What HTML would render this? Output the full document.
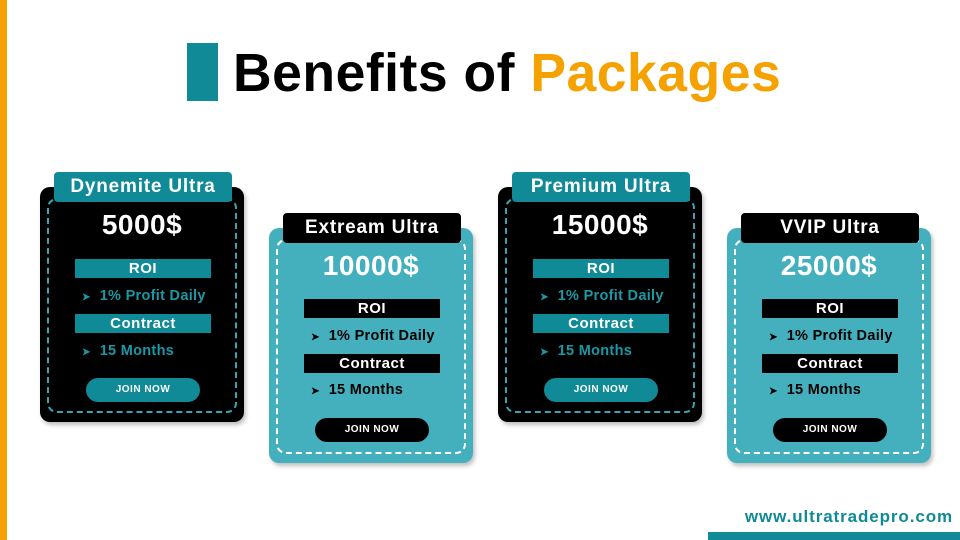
<!DOCTYPE html>
<html><head><style>
*{margin:0;padding:0;box-sizing:border-box}
body{width:960px;height:540px;background:#fff;position:relative;overflow:hidden;font-family:"Liberation Sans",sans-serif;font-weight:bold}
.abs{position:absolute}
.card{position:absolute;width:204px;height:235px;border-radius:10px;box-shadow:2px 3px 4px rgba(0,0,0,.25)}
.dash{position:absolute;left:7px;right:7px;top:11px;bottom:9px;border:2px dashed;border-radius:10px}
.lbl{position:absolute;left:14px;width:178px;top:-15px;height:30px;border-radius:4px;font-size:19px;letter-spacing:0.8px;text-align:center;line-height:30px;color:#fff}
.price{position:absolute;left:0;right:0;top:22px;text-align:center;font-size:28px;letter-spacing:0.5px;color:#fff}
.bar{position:absolute;left:35px;width:136px;height:19px;text-align:center;font-size:15px;letter-spacing:0.5px;line-height:19px;color:#fff}
.li{position:absolute;left:42px;font-size:14.5px;letter-spacing:0.3px}
.li span{font-size:10px;margin-right:9px}
.btn{position:absolute;left:46px;width:114px;height:24px;border-radius:12px;text-align:center;line-height:24px;font-size:10px;color:#fff;letter-spacing:.5px}
.k{background:#000}.k .dash{border-color:#3aa4b0}.k .lbl,.k .bar,.k .btn{background:#0f8a96}.k .li{color:#1b98a5}
.t{background:#45b0bd}.t .dash{border-color:#fff}.t .lbl,.t .bar,.t .btn{background:#000}.t .li{color:#000}
</style></head><body>
<div class="abs" style="left:0;top:0;width:7px;height:540px;background:#f5a100"></div>
<div class="abs" style="left:187px;top:43px;width:31px;height:58px;background:#0f8a96"></div>
<div class="abs" style="left:233px;top:43px;font-size:53.5px;letter-spacing:0.5px;line-height:62px;color:#000;white-space:nowrap">Benefits of <span style="color:#f5a100">Packages</span></div>

<div class="card k" style="left:40px;top:187px"><div class="dash"></div><div class="lbl">Dynemite Ultra</div><div class="price">5000$</div>
<div class="bar" style="top:72px">ROI</div><div class="li" style="top:101px"><span>➤</span>1% Profit Daily</div>
<div class="bar" style="top:127px">Contract</div><div class="li" style="top:156px"><span>➤</span>15 Months</div>
<div class="btn" style="top:191px">JOIN NOW</div></div>

<div class="card t" style="left:269px;top:228px"><div class="dash"></div><div class="lbl">Extream Ultra</div><div class="price">10000$</div>
<div class="bar" style="top:71px">ROI</div><div class="li" style="top:100px"><span>➤</span>1% Profit Daily</div>
<div class="bar" style="top:126px">Contract</div><div class="li" style="top:154px"><span>➤</span>15 Months</div>
<div class="btn" style="top:190px">JOIN NOW</div></div>

<div class="card k" style="left:498px;top:187px"><div class="dash"></div><div class="lbl">Premium Ultra</div><div class="price">15000$</div>
<div class="bar" style="top:72px">ROI</div><div class="li" style="top:101px"><span>➤</span>1% Profit Daily</div>
<div class="bar" style="top:127px">Contract</div><div class="li" style="top:156px"><span>➤</span>15 Months</div>
<div class="btn" style="top:191px">JOIN NOW</div></div>

<div class="card t" style="left:727px;top:228px"><div class="dash"></div><div class="lbl">VVIP Ultra</div><div class="price">25000$</div>
<div class="bar" style="top:71px">ROI</div><div class="li" style="top:100px"><span>➤</span>1% Profit Daily</div>
<div class="bar" style="top:126px">Contract</div><div class="li" style="top:154px"><span>➤</span>15 Months</div>
<div class="btn" style="top:190px">JOIN NOW</div></div>

<div class="abs" style="right:7px;top:507px;font-size:17px;letter-spacing:0.9px;color:#0f8a96">www.ultratradepro.com</div>
<div class="abs" style="left:708px;top:532px;width:252px;height:8px;background:#0f8a96"></div>
</body></html>
